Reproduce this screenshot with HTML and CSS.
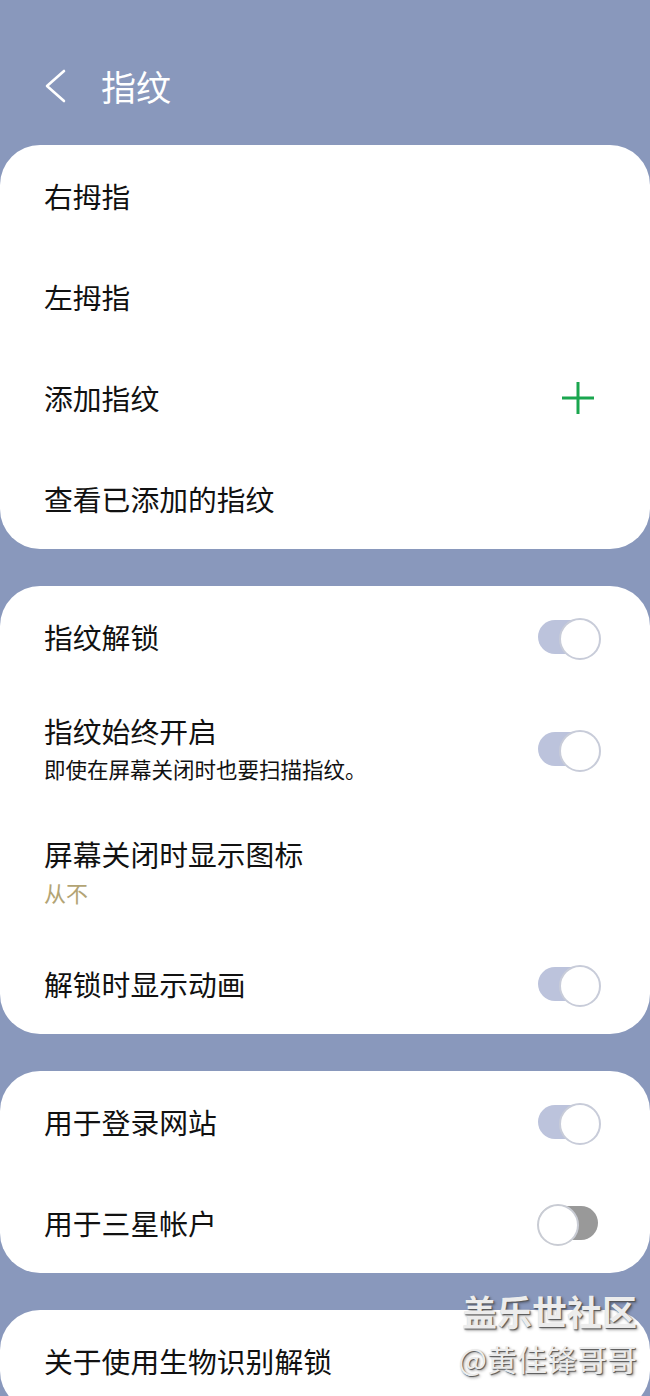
FILE: index.html
```html
<!doctype html>
<html lang="zh-CN">
<head>
  <meta charset="UTF-8">
  <meta name="viewport" content="width=device-width, initial-scale=1.0">
  <title>指纹</title>
  <link rel="stylesheet" href="styles.css">
</head>
<body>
<div id="app">
  <div class="app-header">
    <svg class="back" width="24" height="36" viewBox="0 0 24 36">
      <polyline points="20,3 3,18 20,33" fill="none" stroke="#fff" stroke-width="2.6" stroke-linecap="round" stroke-linejoin="round"/>
    </svg>
    <span class="app-title">指纹</span>
  </div>

  <div class="card">
    <div class="row"><span class="label">右拇指</span></div>
    <div class="row"><span class="label">左拇指</span></div>
    <div class="row">
      <span class="label">添加指纹</span>
      <svg class="plus" width="34" height="34" viewBox="0 0 34 34">
        <path d="M17 1 V33 M1 17 H33" stroke="#1aa64f" stroke-width="3"/>
      </svg>
    </div>
    <div class="row"><span class="label">查看已添加的指纹</span></div>
  </div>

  <div class="card">
    <div class="row">
      <span class="label">指纹解锁</span>
      <span class="switch on"></span>
    </div>
    <div class="row two">
      <div class="text">
        <div class="label">指纹始终开启</div>
        <div class="sub">即使在屏幕关闭时也要扫描指纹。</div>
      </div>
      <span class="switch on"></span>
    </div>
    <div class="row two">
      <div class="text">
        <div class="label">屏幕关闭时显示图标</div>
        <div class="sub value">从不</div>
      </div>
    </div>
    <div class="row">
      <span class="label">解锁时显示动画</span>
      <span class="switch on"></span>
    </div>
  </div>

  <div class="card">
    <div class="row">
      <span class="label">用于登录网站</span>
      <span class="switch on"></span>
    </div>
    <div class="row">
      <span class="label">用于三星帐户</span>
      <span class="switch"></span>
    </div>
  </div>

  <div class="card">
    <div class="row"><span class="label">关于使用生物识别解锁</span></div>
  </div>

  <div class="watermark">
    <div class="wm-big">盖乐世社区</div>
    <div class="wm-small">@黄佳锋哥哥</div>
  </div>
</div>
</body>
</html>
```

FILE: styles.css
```css
* {
  margin: 0;
  padding: 0;
  box-sizing: border-box;
}
html, body {
  width: 100%;
  height: 100%;
}
body {
  background: #8998bc;
  font-family: "Noto Sans CJK SC", "Noto Sans", sans-serif;
  color: #111;
  overflow: hidden;
}
#app {
  position: relative;
  height: 100%;
}
.app-header {
  height: 145px;
  padding: 50px 0 23px 44px;
  display: flex;
  align-items: center;
}
.back {
  margin-right: 33px;
}
.app-title {
  color: #fff;
  font-size: 35px;
  line-height: 72px;
}
.card {
  background: #fff;
  border-radius: 40px;
  margin-bottom: 37px;
}
.row {
  min-height: 101px;
  padding: 0 49px 0 44px;
  display: flex;
  align-items: center;
  justify-content: space-between;
}
.row.two {
  padding-top: 26px;
  padding-bottom: 26px;
}
.label {
  font-size: 28.8px;
  line-height: 36px;
}
.sub {
  font-size: 21.5px;
  line-height: 30px;
  margin-top: 5px;
}
.sub.value {
  font-size: 22px;
  color: #b3a474;
}
.plus {
  margin-right: 6px;
}
.switch {
  position: relative;
  width: 64px;
  height: 38px;
  flex-shrink: 0;
}
.switch::before {
  content: "";
  position: absolute;
  left: 1px;
  top: 2px;
  width: 60px;
  height: 34px;
  border-radius: 17px;
  background: #999;
}
.switch::after {
  content: "";
  position: absolute;
  left: 0;
  top: 0;
  width: 38px;
  height: 38px;
  border-radius: 50%;
  background: #fff;
  border: 2px solid #c9ccd4;
}
.switch.on::before {
  background: #bcc3dc;
}
.switch.on::after {
  left: auto;
  right: 0;
  border-color: #c8ccd9;
}
.watermark {
  position: absolute;
  right: 13px;
  top: 1286px;
  text-align: right;
  color: #ececec;
  text-shadow: 1px 1px 1px #555, 2px 2px 3px rgba(0, 0, 0, 0.35);
}
.wm-big {
  font-size: 35px;
  font-weight: bold;
  line-height: 50px;
}
.wm-small {
  font-size: 30px;
  line-height: 44px;
}
```
